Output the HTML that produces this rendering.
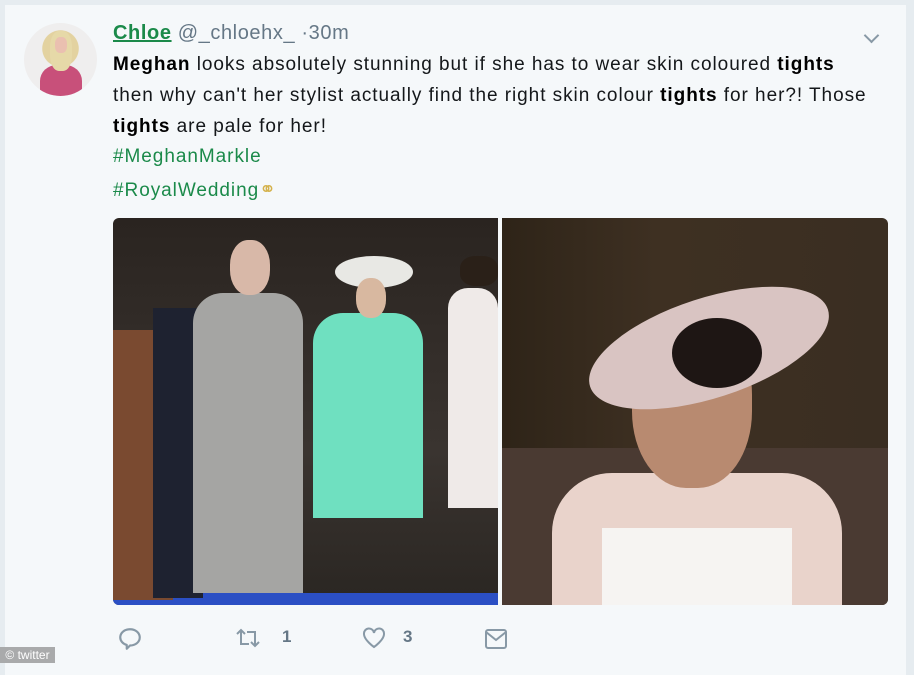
<!DOCTYPE html>
<html><head><style>
body{margin:0;width:914px;height:663px;background:#e6ecf0;position:relative;overflow:hidden;font-family:"Liberation Sans",sans-serif}
.card{position:absolute;left:5px;top:5px;width:901px;height:670px;background:#f5f8fa}
.a{position:absolute}
.t{position:absolute;left:113px;font-size:19px;letter-spacing:0.95px;color:#14171a;white-space:nowrap}
.t b{color:#000}
.g{color:#1b8a4a}
.ic{position:absolute;top:627px;color:#657786;font-size:17px;font-weight:bold}
</style></head><body>
<div class="card"></div>
<div class="a" style="left:24px;top:23px;width:73px;height:73px;border-radius:50%;background:radial-gradient(circle at 50% 35%,#e8c8b8 0 12%,#e3d2a0 13% 30%,#efeeee 31%);overflow:hidden">
 <div class="a" style="left:16px;top:42px;width:42px;height:40px;background:#c8507a;border-radius:40% 40% 0 0"></div>
 <div class="a" style="left:26px;top:8px;width:22px;height:40px;background:#e6d9a8;border-radius:40%"></div>
 <div class="a" style="left:31px;top:14px;width:12px;height:16px;background:#eac0b0;border-radius:40%"></div>
</div>
<div class="t" style="top:22px;font-size:20px;letter-spacing:0.6px;color:#657786"><span style="color:#1b8a4a;font-weight:bold;text-decoration:underline">Chloe</span> @_chloehx_ ·30m</div>
<div class="a" style="left:866px;top:30px;width:9px;height:9px;border-right:2px solid #8899a6;border-bottom:2px solid #8899a6;transform:rotate(45deg)"></div>
<div class="t" style="top:54px"><b>Meghan</b> looks absolutely stunning but if she has to wear skin coloured <b>tights</b></div>
<div class="t" style="top:85px">then why can't her stylist actually find the right skin colour <b>tights</b> for her?! Those</div>
<div class="t" style="top:116px"><b>tights</b> are pale for her!</div>
<div class="t g" style="top:146px">#MeghanMarkle</div>
<div class="t g" style="top:177px">#RoyalWedding<span style="color:#d4b24c;font-size:20px">⚭</span></div>
<!-- left photo -->
<div class="a" style="left:113px;top:218px;width:385px;height:387px;background:linear-gradient(#2a2420,#3a3430 60%,#2a2622);overflow:hidden;border-radius:6px 0 0 6px">
 <div class="a" style="left:0;top:375px;width:385px;height:12px;background:#2b4fc4"></div>
 <div class="a" style="left:0;top:112px;width:60px;height:270px;background:#7a4a30"></div>
 <div class="a" style="left:40px;top:90px;width:50px;height:290px;background:#1e2230"></div>
 <div class="a" style="left:80px;top:75px;width:110px;height:300px;background:#a5a5a3;border-radius:30px 30px 0 0"></div>
 <div class="a" style="left:117px;top:22px;width:40px;height:55px;background:#d8b8a8;border-radius:45%"></div>
 <div class="a" style="left:200px;top:95px;width:110px;height:205px;background:#6fe0c0;border-radius:30px 30px 0 0"></div>
 <div class="a" style="left:222px;top:38px;width:78px;height:32px;background:#e8e8e4;border-radius:50%"></div>
 <div class="a" style="left:243px;top:60px;width:30px;height:40px;background:#d8b8a0;border-radius:45%"></div>
 <div class="a" style="left:335px;top:70px;width:50px;height:220px;background:#efeae8;border-radius:20px 20px 0 0"></div>
 <div class="a" style="left:347px;top:38px;width:38px;height:30px;background:#2a2018;border-radius:40%"></div>
</div>
<!-- right photo -->
<div class="a" style="left:502px;top:218px;width:386px;height:387px;background:linear-gradient(90deg,#2e2418,#3e3022 40%,#3a2e22);overflow:hidden;border-radius:0 6px 6px 0">
 <div class="a" style="left:0;top:230px;width:386px;height:157px;background:#4a3a32"></div>
 <div class="a" style="left:50px;top:255px;width:290px;height:140px;background:#e9d3cb;border-radius:60px 60px 0 0"></div>
 <div class="a" style="left:100px;top:310px;width:190px;height:80px;background:#f6f4f2"></div>
 <div class="a" style="left:130px;top:100px;width:120px;height:170px;background:#b88a70;border-radius:45%"></div>
 <div class="a" style="left:82px;top:80px;width:250px;height:100px;background:#d9c4c2;border-radius:50%;transform:rotate(-18deg)"></div>
 <div class="a" style="left:170px;top:100px;width:90px;height:70px;background:#1e1614;border-radius:50%"></div>
</div>
<!-- actions -->
<svg class="a" style="left:117px;top:626px" width="26" height="26" viewBox="0 0 24 24" fill="none" stroke="#8899a6" stroke-width="2" stroke-linejoin="round"><path d="M12 3c5 0 9 3.2 9 7.5S17 18 12 18l-3 3v-3.5C5.5 16.5 3 13.8 3 10.5 3 6.2 7 3 12 3z"/></svg>
<svg class="a" style="left:235px;top:628px" width="26" height="20" viewBox="0 0 26 20" fill="none" stroke="#8899a6" stroke-width="2"><path d="M2 6l4-4 4 4M6 2v14h8M24 14l-4 4-4-4M20 18V4h-8"/></svg>
<div class="ic" style="left:282px">1</div>
<svg class="a" style="left:362px;top:627px" width="24" height="22" viewBox="0 0 24 22" fill="none" stroke="#8899a6" stroke-width="2"><path d="M12 20S2 13 2 7a5 5 0 0 1 10-1 5 5 0 0 1 10 1c0 6-10 13-10 13z"/></svg>
<div class="ic" style="left:403px">3</div>
<svg class="a" style="left:484px;top:628px" width="24" height="22" viewBox="0 0 24 22" fill="none" stroke="#8899a6" stroke-width="2"><rect x="2" y="2" width="20" height="18" rx="2"/><path d="M2 4l10 8 10-8"/></svg>
<div class="a" style="left:0;top:647px;width:55px;height:16px;background:#a9aaab;color:#fff;font-size:12px;line-height:16px;text-align:center">© twitter</div>
</body></html>
